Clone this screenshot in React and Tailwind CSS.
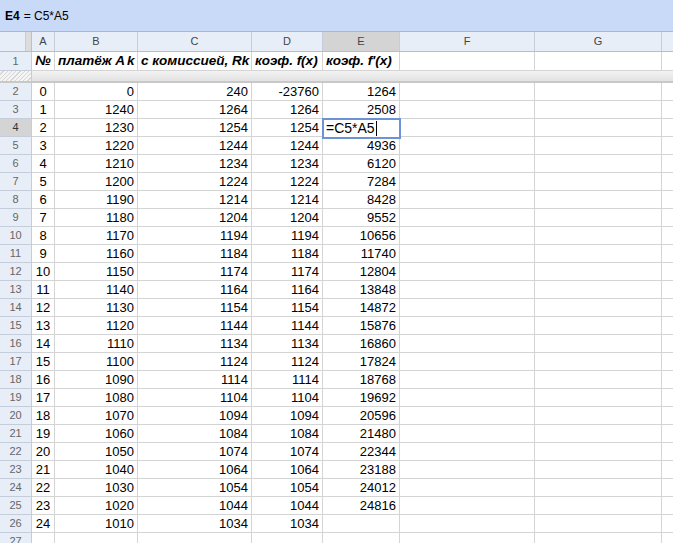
import React from "react";

const E = [1264, 2508, null, 4936, 6120, 7284, 8428, 9552, 10656, 11740, 12804, 13848, 14872, 15876, 16860, 17824, 18768, 19692, 20596, 21480, 22344, 23188, 24012, 24816, ""];

const rows = E.map((e, k) => ({
  a: k,
  b: k === 0 ? 0 : 1250 - 10 * k,
  c: k === 0 ? 240 : 1274 - 10 * k,
  d: k === 0 ? -23760 : 1274 - 10 * k,
  e,
}));

const cols = [
  { key: "A", w: "w-[23px]" },
  { key: "B", w: "w-[83px]" },
  { key: "C", w: "w-[114px]" },
  { key: "D", w: "w-[71px]" },
  { key: "E", w: "w-[77px]" },
  { key: "F", w: "w-[135px]" },
  { key: "G", w: "w-[127px]" },
];

function RowHead({ n, active }) {
  return (
    <div
      className={
        "w-[32px] shrink-0 h-full flex items-center justify-center text-[11px] border-r border-b border-[#c4cdd9] " +
        (active ? "bg-[#d4d4d4] text-[#333]" : "bg-[#e8eef7] text-[#666]")
      }
    >
      {n}
    </div>
  );
}

function Cell({ w, children, align = "right", italic }) {
  const al = align === "right" ? "justify-end pr-[3px]" : align === "center" ? "justify-center" : "justify-start pl-[3px]";
  return (
    <div
      className={
        w +
        " shrink-0 h-full flex items-center border-r border-b border-[#d4d4d4] overflow-hidden whitespace-nowrap " +
        al +
        (italic ? " font-bold italic text-[13.5px]" : "")
      }
    >
      {children}
    </div>
  );
}

export default function App() {
  return (
    <div className="w-[673px] h-[543px] overflow-hidden bg-white text-[13px] text-black" style={{ fontFamily: '"Liberation Sans", Arial, sans-serif' }}>
      <div className="h-[32px] bg-[#c9daf8] flex items-center pl-[5px] text-[12px] border-b border-[#a9b8d0]">
        <span className="font-bold">E4</span>
        <span className="ml-[4px]">= C5*A5</span>
      </div>

      {/* column headers */}
      <div className="h-[20px] flex bg-[#e8eef7] border-b border-[#a9c0e6] text-[11px] text-[#444]">
        <div className="w-[26px] shrink-0 border-r border-[#c4cdd9]" />
        <div className="w-[6px] shrink-0 bg-[#dcdcdc] border-r border-[#bfbfbf]" />
        {cols.map((c) => (
          <div
            key={c.key}
            className={
              c.w +
              " shrink-0 flex items-center justify-center border-r border-[#c4cdd9] " +
              (c.key === "E" ? "bg-[#d4d4d4]" : "")
            }
          >
            {c.key}
          </div>
        ))}
        <div className="flex-1" />
      </div>

      {/* row 1 */}
      <div className="h-[19px] flex">
        <RowHead n={1} />
        <Cell w="w-[23px]" align="center" italic>№</Cell>
        <Cell w="w-[83px]" align="left" italic>
          платёж A<span className="ml-[2px]">k</span>
        </Cell>
        <Cell w="w-[114px]" align="left" italic>с комиссией, Rk</Cell>
        <Cell w="w-[71px]" align="left" italic>коэф. f(x)</Cell>
        <Cell w="w-[77px]" align="left" italic>коэф. f'(x)</Cell>
        <Cell w="w-[135px]" />
        <Cell w="w-[127px]" />
        <div className="flex-1 border-b border-[#d4d4d4]" />
      </div>

      {/* frozen separator */}
      <div className="h-[12px] flex border-b-2 border-[#c8c8c8]">
        <div className="w-[32px] shrink-0 bg-[repeating-linear-gradient(135deg,#f4f4f4_0px,#f4f4f4_2px,#d6d6d6_2px,#d6d6d6_3px)] border-r border-[#c4cdd9]" />
        <div className="flex-1 bg-gradient-to-b from-[#f3f3f3] to-[#e2e2e2]" />
      </div>

      {rows.map((r, i) => (
        <div key={i} className="h-[18px] flex">
          <RowHead n={i + 2} active={i === 2} />
          <Cell w="w-[23px]" align="center">{r.a}</Cell>
          <Cell w="w-[83px]">{r.b}</Cell>
          <Cell w="w-[114px]">{r.c}</Cell>
          <Cell w="w-[71px]">{r.d}</Cell>
          {r.e === null ? (
            <div className="w-[77px] shrink-0 h-full relative border-r border-b border-[#d4d4d4]">
              <div className="absolute -top-[1px] -left-[1px] w-[79px] h-[21px] bg-white border-2 border-[#6d93d6] flex items-center pl-[2px] text-[14px] z-10">
                =C5*A5<span className="inline-block w-[1px] h-[15px] bg-black ml-[1px]" />
              </div>
            </div>
          ) : (
            <Cell w="w-[77px]">{r.e}</Cell>
          )}
          <Cell w="w-[135px]" />
          <Cell w="w-[127px]" />
          <div className="flex-1 border-b border-[#d4d4d4]" />
        </div>
      ))}

      <div className="h-[18px] flex">
        <RowHead n={27} />
        <Cell w="w-[23px]" />
        <Cell w="w-[83px]" />
        <Cell w="w-[114px]" />
        <Cell w="w-[71px]" />
        <Cell w="w-[77px]" />
        <Cell w="w-[135px]" />
        <Cell w="w-[127px]" />
      </div>
    </div>
  );
}
